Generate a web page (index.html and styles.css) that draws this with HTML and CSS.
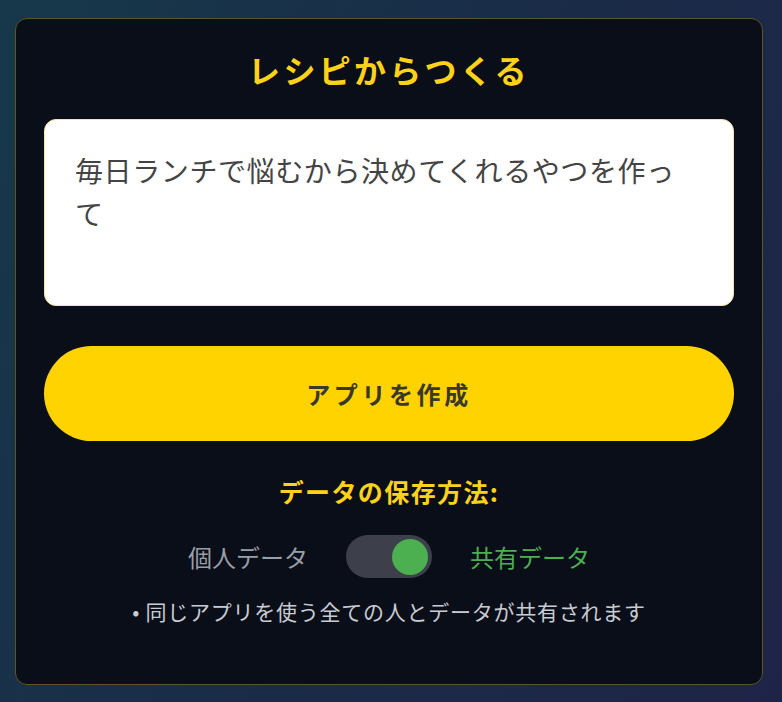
FILE: index.html
```html
<!DOCTYPE html>
<html lang="ja">
<head>
<meta charset="utf-8">
<title>レシピからつくる</title>
<link rel="stylesheet" href="styles.css">
</head>
<body>
  <main class="card">
    <h1 class="title">レシピからつくる</h1>
    <div class="prompt">毎日ランチで悩むから決めてくれるやつを作って</div>
    <button class="create">アプリを作成</button>
    <h2 class="storage-title">データの保存方法:</h2>
    <div class="toggle-row">
      <span class="label label-off">個人データ</span>
      <span class="switch"><span class="knob"></span></span>
      <span class="label label-on">共有データ</span>
    </div>
    <p class="note">• 同じアプリを使う全ての人とデータが共有されます</p>
  </main>
</body>
</html>
```

FILE: styles.css
```css
* { box-sizing: border-box; }
html, body { height: 100%; }
body {
  margin: 0;
  padding: 18px 19px 17px 15px;
  display: flex;
  background: linear-gradient(115deg, #16384a 0%, #1a2c48 50%, #1e2447 100%);
  font-family: "Noto Sans CJK JP", "Noto Sans", sans-serif;
}
.card {
  flex: 1;
  display: flex;
  flex-direction: column;
  align-items: stretch;
  padding: 30px 28px 0;
  background: #0a0e18;
  border: 1px solid #5e5424;
  border-radius: 12px;
}
.title {
  margin: 0;
  height: 40px;
  line-height: 40px;
  text-align: center;
  color: #ffd21a;
  font-size: 32px;
  font-weight: 700;
  letter-spacing: 3.3px;
}
.prompt {
  margin-top: 30px;
  height: 187px;
  padding: 29px 44px 0 30px;
  background: #ffffff;
  border: 1px solid #f3e6a6;
  border-radius: 12px;
  color: #444444;
  font-size: 28px;
  line-height: 43px;
  letter-spacing: 0.6px;
}
.create {
  margin-top: 40px;
  height: 95px;
  border: none;
  border-radius: 48px;
  background: #ffd300;
  color: #3a382c;
  font-family: inherit;
  font-size: 24px;
  font-weight: 700;
  letter-spacing: 3.6px;
}
.storage-title {
  margin: 34px 0 0;
  height: 32px;
  line-height: 32px;
  text-align: center;
  color: #ffd21a;
  font-size: 25px;
  font-weight: 700;
  letter-spacing: 1.4px;
}
.toggle-row {
  margin-top: 28px;
  display: flex;
  justify-content: center;
  align-items: center;
  gap: 38px;
  height: 43px;
}
.label {
  font-size: 24px;
  line-height: 32px;
}
.label-off { color: #9a9ea6; }
.label-on { color: #4caf50; }
.switch {
  width: 86px;
  height: 43px;
  border-radius: 22px;
  background: #3d404a;
  display: flex;
  align-items: center;
  justify-content: flex-end;
  padding-right: 4px;
}
.knob {
  width: 36px;
  height: 36px;
  border-radius: 50%;
  background: #4caf50;
}
.note {
  margin: 19px 0 0;
  text-align: center;
  color: #c8ccd2;
  font-size: 21px;
  line-height: 28px;
  letter-spacing: 0.75px;
}
```
